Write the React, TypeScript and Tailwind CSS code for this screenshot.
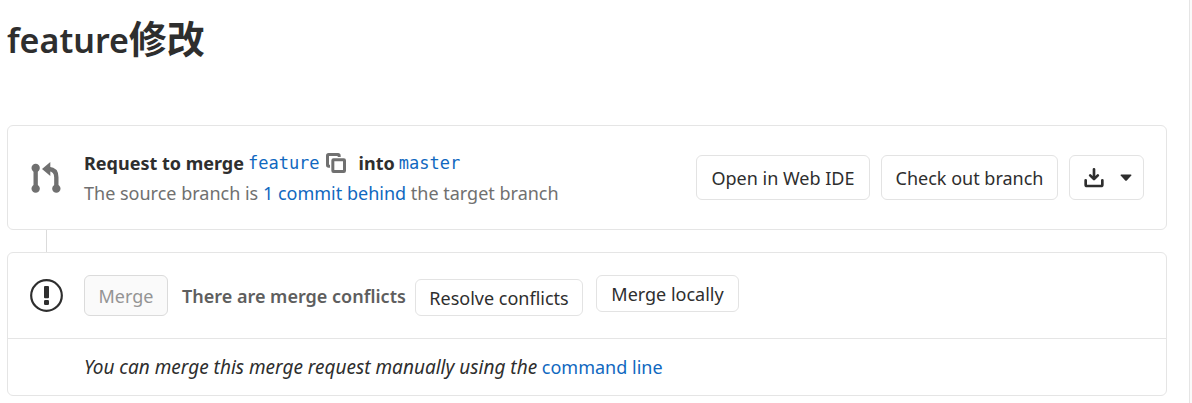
import type { ReactNode } from 'react';

function MergeRequestIcon() {
  return (
    <svg className="h-8 w-[30px] shrink-0 text-[#707070]" viewBox="0 0 90 96" fill="none" aria-hidden="true">
      <g fill="currentColor">
        <circle cx="14" cy="18" r="12.5" />
        <circle cx="14" cy="80" r="12.5" />
        <circle cx="76" cy="80" r="12.5" />
        <path d="M33 21 58 0V42Z" />
      </g>
      <path d="M14 18V80M54 21C69 22 76 31 76 46V80" stroke="currentColor" strokeWidth="13" />
    </svg>
  );
}

function CopyIcon() {
  return (
    <svg className="h-5 w-5" viewBox="0 0 60 60" fill="none" stroke="currentColor" strokeWidth="9" aria-hidden="true">
      <path d="M12 39.5H8Q4.500 39.5 4.500 36V8Q4.500 4.500 8 4.500H36Q39.500 4.500 39.500 8V12" />
      <rect x="20.500" y="20.500" width="35" height="35" rx="2" />
    </svg>
  );
}

function DownloadIcon() {
  return (
    <svg
      className="h-5 w-5"
      viewBox="0 0 60 60"
      fill="none"
      stroke="currentColor"
      strokeWidth="8"
      strokeLinecap="round"
      strokeLinejoin="round"
      aria-hidden="true"
    >
      <path d="M30 4V32M18.500 22 30 33.500 41.500 22" />
      <path d="M5 37V50Q5 54 9 54H51Q55 54 55 50V37" />
    </svg>
  );
}

function WarningIcon() {
  return (
    <svg className="h-[33px] w-[33px] shrink-0 text-[#2e2e2e]" viewBox="0 0 99 99" fill="none" aria-hidden="true">
      <circle cx="49.500" cy="49.500" r="46" stroke="currentColor" strokeWidth="6.500" />
      <rect x="42" y="21" width="15" height="37" rx="3" fill="currentColor" />
      <rect x="42" y="63" width="15" height="15" rx="4" fill="currentColor" />
    </svg>
  );
}

function Button({ className, children }: { className: string; children: ReactNode }) {
  return (
    <button
      type="button"
      className={`flex shrink-0 items-center justify-center whitespace-nowrap rounded-md border border-[#e3e3e3] bg-white ${className}`}
    >
      {children}
    </button>
  );
}

export default function App() {
  return (
    <div className="flex min-h-screen bg-[#fafafa] font-['Noto_Sans','Noto_Sans_CJK_SC',sans-serif] text-[18px] leading-[30px] text-[#2e2e2e]">
      <main className="min-w-0 flex-1 border-r border-[#e5e5e5] bg-white pb-[7px] pl-[7px] pr-[22px] pt-[14px]">
        <h1 className="text-[34px] font-semibold leading-[48px]">
          feature<span className="text-[38px] font-bold">修改</span>
        </h1>

        <section className="mt-[61px] flex items-center rounded-md border border-[#e5e5e5] py-[29px] pl-[23px] pr-[22px]">
          <MergeRequestIcon />
          <div className="-my-2 ml-[23px] min-w-0 flex-1">
            <div className="flex items-center">
              <strong className="font-bold">Request to merge</strong>
              <a href="#feature" className="ml-1 font-['DejaVu_Sans_Mono',monospace] text-[17px] text-[#1068bf]">
                feature
              </a>
              <button type="button" aria-label="Copy branch name" className="ml-1.5 mr-[13px] text-[#707070]">
                <CopyIcon />
              </button>
              <strong className="font-bold">into</strong>
              <a href="#master" className="ml-1 font-['DejaVu_Sans_Mono',monospace] text-[17px] text-[#1068bf]">
                master
              </a>
            </div>
            <p className="text-[#707070]">
              The source branch is{' '}
              <a href="#commits" className="text-[#1068bf]">
                1 commit behind
              </a>{' '}
              the target branch
            </p>
          </div>
          <div className="flex gap-[11px]">
            <Button className="h-[45px] w-[174px]">Open in Web IDE</Button>
            <Button className="h-[45px] w-[177px]">Check out branch</Button>
            <button
              type="button"
              aria-label="Download"
              className="flex h-[45px] w-[75px] items-center justify-center gap-4 rounded-md border border-[#e3e3e3] bg-white pl-0.5"
            >
              <DownloadIcon />
              <svg className="h-[7px] w-3" viewBox="0 0 12 7" fill="currentColor" aria-hidden="true">
                <path d="M1.200 .5H10.800Q12 .5 11.300 1.500L6.800 6.500Q6 7.200 5.200 6.500L.7 1.500Q0 .5 1.200 .5Z" />
              </svg>
            </button>
          </div>
        </section>

        <div className="ml-[39px] h-[22px] w-px bg-[#dbdbdb]" />

        <section className="rounded-md border border-[#e5e5e5]">
          <div className="flex items-center py-[22px] pl-[22px]">
            <WarningIcon />
            <div className="ml-[21px] flex h-[41px] items-start">
              <button
                type="button"
                disabled
                className="h-[41px] w-[84px] rounded-md border border-[#dbdbdb] bg-[#fafafa] text-[#949494]"
              >
                Merge
              </button>
              <strong className="ml-[14px] w-[233px] self-center whitespace-nowrap font-semibold text-[#5e5e5e]">
                There are merge conflicts
              </strong>
              <Button className="h-[37px] w-[168px] self-end">Resolve conflicts</Button>
              <Button className="ml-[13px] h-[37px] w-[143px]">Merge locally</Button>
            </div>
          </div>
          <div className="border-t border-[#e5e5e5] py-[13px] pl-[76px]">
            <em className="text-[19px]">You can merge this merge request manually using the</em>{' '}
            <a href="#command-line" className="text-[#1068bf]">
              command line
            </a>
          </div>
        </section>
      </main>
      <div className="w-[2px]" />
    </div>
  );
}
